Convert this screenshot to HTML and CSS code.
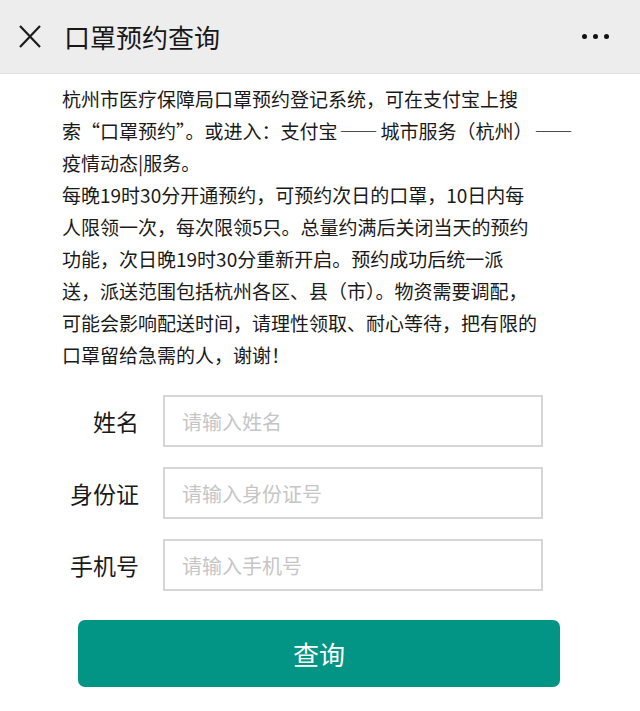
FILE: index.html
```html
<!DOCTYPE html>
<html lang="zh-CN">
<head>
    <meta charset="UTF-8">
    <meta name="viewport" content="width=device-width, initial-scale=1.0">
    <title>口罩预约查询</title>
    <link rel="stylesheet" href="styles.css">
</head>
<body>
    <!-- Top bar -->
    <div class="topbar">
        <svg class="close" width="22" height="23" viewBox="0 0 22 23">
            <path d="M1 1 L21 22 M21 1 L1 22" stroke="#1c1c1c" stroke-width="2.2" fill="none"/>
        </svg>
        <h1 class="title">口罩预约查询</h1>
        <div class="more">
            <span class="dot"></span><span class="dot"></span><span class="dot"></span>
        </div>
    </div>

    <div class="container">
        <!-- Notice text -->
        <div class="notice">
            <p>杭州市医疗保障局口罩预约登记系统，可在支付宝上搜<br>索“口罩预约”。或进入：支付宝<span class="dash">——</span>城市服务（杭州）<span class="dash">——</span><br>疫情动态|服务。</p>
            <p>每晚19时30分开通预约，可预约次日的口罩，10日内每<br>人限领一次，每次限领5只。总量约满后关闭当天的预约<br>功能，次日晚19时30分重新开启。预约成功后统一派<br>送，派送范围包括杭州各区、县（市）。物资需要调配，<br>可能会影响配送时间，请理性领取、耐心等待，把有限的<br>口罩留给急需的人，谢谢！</p>
        </div>

        <form class="query-form" action="#" method="post">
            <div class="row">
                <label for="name">姓名</label>
                <input type="text" id="name" name="name" placeholder="请输入姓名">
            </div>
            <div class="row">
                <label for="idcard">身份证</label>
                <input type="text" id="idcard" name="idcard" placeholder="请输入身份证号">
            </div>
            <div class="row">
                <label for="phone">手机号</label>
                <input type="text" id="phone" name="phone" placeholder="请输入手机号">
            </div>
            <button type="submit">查询</button>
        </form>
    </div>
</body>
</html>
```

FILE: styles.css
```css
body {
    margin: 0;
    padding: 0;
    background-color: #ffffff;
    font-family: "Noto Sans CJK SC", "Noto Sans", sans-serif;
    color: #1a1a1a;
}

/* Top bar */
.topbar {
    height: 73px;
    background-color: #ededed;
    border-bottom: 1px solid #e2e2e2;
    display: flex;
    align-items: center;
    padding: 0 31px 0 19px;
}
.close {
    flex-shrink: 0;
}
.title {
    margin: 0 0 0 23px;
    font-size: 26px;
    font-weight: normal;
    color: #181818;
    flex: 1;
}
.more {
    display: flex;
    gap: 6px;
}
.dot {
    width: 5px;
    height: 5px;
    border-radius: 50%;
    background-color: #111111;
}

/* Content */
.container {
    padding: 9px 0 0 62px;
}
.notice p {
    margin: 0;
    font-size: 19px;
    line-height: 32px;
    white-space: nowrap;
}
.dash {
    letter-spacing: 3px;
    margin-left: 2px;
}

.query-form {
    margin-top: 24px;
}
.row {
    display: flex;
    align-items: center;
    margin-bottom: 20px;
}
.row label {
    width: 77px;
    text-align: right;
    font-size: 23px;
    margin-right: 24px;
}
.row input {
    box-sizing: border-box;
    width: 380px;
    height: 52px;
    border: 2px solid #d6d6d6;
    padding: 0 17px;
    font-size: 20px;
    font-family: inherit;
    color: #333;
    outline: none;
}
.row input::placeholder {
    color: #c6c6c6;
}

button {
    display: block;
    margin: 29px 0 0 16px;
    width: 482px;
    height: 67px;
    background-color: #029484;
    color: #ffffff;
    border: none;
    border-radius: 7px;
    font-size: 26px;
    font-family: inherit;
    cursor: pointer;
}
button:hover {
    background-color: #01857a;
}
```
